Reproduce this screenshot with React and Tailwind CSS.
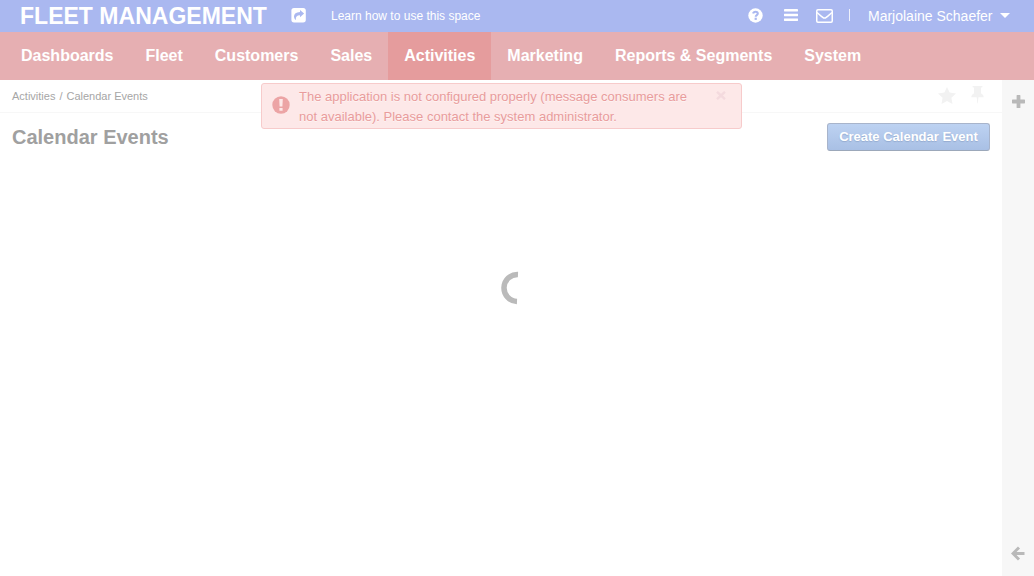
const NAV = ['Dashboards', 'Fleet', 'Customers', 'Sales', 'Activities', 'Marketing', 'Reports & Segments', 'System'];

function ShareIcon() {
  return (
    <svg width="15" height="15" viewBox="0 0 15 15" className="mb-px block">
      <path fill="#fff" fillRule="evenodd" d="M3 0h9.200a2.600 2.600 0 0 1 2.600 2.600v9.200a2.600 2.600 0 0 1-2.600 2.600H3a2.600 2.600 0 0 1-2.600-2.600V2.600A2.600 2.600 0 0 1 3 0ZM9 2v1.900C5 4 3 5.800 3 8.200c0 1.600.6 2.700 1.500 3.600.3.200.5.100.4-.2-.4-2.700.9-4.300 4.100-4.400v2.100l4.100-3.700Z" />
    </svg>
  );
}

function HelpIcon() {
  return (
    <svg width="15" height="15" viewBox="0 0 15 15" className="mb-px block">
      <circle cx="7.500" cy="7.500" r="7.200" fill="#fff" />
      <path d="M5.100 5.600C5.400 4.300 6.300 3.700 7.500 3.700c1.300 0 2.300.8 2.300 1.900 0 1.500-2.100 1.500-2.100 3.100" fill="none" stroke="#aab8f0" strokeWidth="2.100" />
      <rect x="6.600" y="9.700" width="2.200" height="2.200" fill="#aab8f0" />
    </svg>
  );
}

function MenuIcon() {
  return (
    <svg width="14" height="12" viewBox="0 0 14 12" className="mb-0.5 block" fill="#fff">
      <rect width="14" height="2.500" rx=".4" />
      <rect y="4.700" width="14" height="2.500" rx=".4" />
      <rect y="9.400" width="14" height="2.500" rx=".4" />
    </svg>
  );
}

function MailIcon() {
  return (
    <svg width="17" height="14" viewBox="0 0 17 14" className="block" fill="none" stroke="#fff" strokeWidth="1.500">
      <rect x=".75" y=".75" width="15.500" height="12.500" rx="1.200" />
      <path d="M1 3.500c2 2 4 3.400 5.800 4.900 1.100.9 2.300.9 3.400 0C12 6.900 14 5.500 16 3.500" />
    </svg>
  );
}

function PinIcon() {
  return (
    <svg width="13" height="18" viewBox="0 0 13 18" className="block" fill="#f2f2f2">
      <path d="M2.400 0h8.200q1 0 1 .8t-1 .8H10v5.600q2.800 1.400 2.800 4H7.400L6.900 17q-.3.900-.6 0l-.6-5.800H.2q0-2.600 2.800-4V1.600h-.6q-1 0-1-.8t1-.8Z" />
    </svg>
  );
}

export default function App() {
  return (
    <div className="flex h-[576px] w-[1034px] flex-col overflow-hidden bg-white font-['Liberation_Sans',Arial,sans-serif] whitespace-nowrap">
      <header className="flex h-8 shrink-0 items-center bg-[#aab8f0] pl-5 text-white">
        <h1 className="w-[271px] text-[23px] leading-8 font-bold tracking-[0.02px]">FLEET MANAGEMENT</h1>
        <ShareIcon />
        <span className="ml-[25px] text-xs leading-8">Learn how to use this space</span>
        <div className="ml-auto flex h-8 items-center">
          <HelpIcon />
          <span className="ml-[21px]"><MenuIcon /></span>
          <span className="ml-[18px]"><MailIcon /></span>
          <span className="mb-[3px] ml-4 h-3 w-px bg-white/80" />
          <span className="ml-[18px] w-[132px] text-sm leading-8">Marjolaine Schaefer</span>
          <svg width="10" height="5" viewBox="0 0 10 5" className="mr-6 mb-px block"><path d="M0 0h10L5 5Z" fill="#fff" /></svg>
        </div>
      </header>

      <nav className="flex h-12 shrink-0 bg-[#e6afb2] pl-[5px] text-base leading-[47px] font-bold text-white">
        {NAV.map((label) => (
          <a key={label} className={label === 'Activities' ? 'bg-[#e59c9d] px-4' : 'px-4'}>{label}</a>
        ))}
      </nav>

      <div className="flex min-h-0 flex-1">
        <main className="relative flex w-[1002px] flex-col">
          <div className="flex h-[33px] shrink-0 items-center justify-between border-b border-[#f7f7f7] pl-3">
            <span className="flex gap-1 text-[11px] text-[#a6a6a6]">
              <span>Activities</span>
              <span>/</span>
              <span>Calendar Events</span>
            </span>
            <div className="mr-[18px] mb-[2px] flex items-center gap-[14px]">
              <svg width="18" height="17" viewBox="0 0 18 17" className="mr-px block" fill="#f2f2f2">
                <path d="M9 0l2.600 5.600 6.400.8-4.600 4.300 1.100 6.300L9 14l-5.500 3 1.100-6.300L0 6.400l6.400-.8Z" />
              </svg>
              <PinIcon />
            </div>
          </div>
          <div className="flex items-start justify-between pt-[10px] pr-3 pl-3">
            <h2 className="text-xl leading-7 font-bold text-[#a0a0a0]">Calendar Events</h2>
            <button className="flex h-7 w-[163px] justify-center rounded-[3px] border border-[#a8b4cb] border-b-[#9ca8ba] bg-linear-to-b from-[#bdd2f2] to-[#a9c0e5] text-[13px] leading-[25px] font-bold text-white [text-shadow:0_1px_1px_rgba(90,110,150,0.3)]">
              Create Calendar Event
            </button>
          </div>
          <div className="flex justify-center pt-[120px] pl-[33px]">
            <svg width="33" height="34" viewBox="0 0 33 34" className="block">
              <path d="M17 3.500a13.500 13.500 0 0 0-1 27" fill="none" stroke="#bababa" strokeWidth="5.500" />
            </svg>
          </div>

          <div className="absolute top-[3px] left-[261px] flex h-[46px] w-[481px] rounded-[3px] border border-[#f7cbcb] bg-[#fde8e8] text-[13px] leading-5 text-[#e99c9c] [text-shadow:0_1px_0_rgba(255,255,255,0.5)]">
            <svg width="18" height="18" viewBox="0 0 18 18" className="mt-3 ml-[10px] block shrink-0">
              <circle cx="9" cy="9" r="8.700" fill="#eca4a5" />
              <path d="M7.200 3h3.600l-.4 7.500H7.600ZM7.400 12h3.200v2.800H7.400Z" fill="#fde8e8" />
            </svg>
            <p className="ml-[9px] w-[417px] pt-[3px]">
              The application is not configured properly (message consumers are<br />
              not available). Please contact the system administrator.
            </p>
            <svg width="10" height="9" viewBox="0 0 10 9" className="mt-[7px] block" stroke="#f4dade" strokeWidth="2.400">
              <path d="M1 .8l8 7.400M9 .8L1 8.200" />
            </svg>
          </div>
        </main>

        <aside className="flex w-8 flex-col items-center justify-between bg-[#f7f7f7] pt-[15px] pb-[15px]">
          <svg width="13" height="13" viewBox="0 0 13 13" className="block" fill="#b9b9b9">
            <path d="M5.200 0h2.600q.6 0 .6.600v4h4q.6 0 .6.600v2.600q0 .6-.6.600h-4v4q0 .6-.6.600H5.200q-.6 0-.6-.6v-4h-4Q0 8.400 0 7.800V5.200q0-.6.600-.6h4v-4Q4.600 0 5.200 0Z" />
          </svg>
          <svg width="14" height="15" viewBox="0 0 14 15" className="block" fill="none" stroke="#b9b9b9" strokeWidth="3">
            <path d="M8 1.500l-6 6 6 6M2.500 7.500H13.500" />
          </svg>
        </aside>
      </div>
    </div>
  );
}
